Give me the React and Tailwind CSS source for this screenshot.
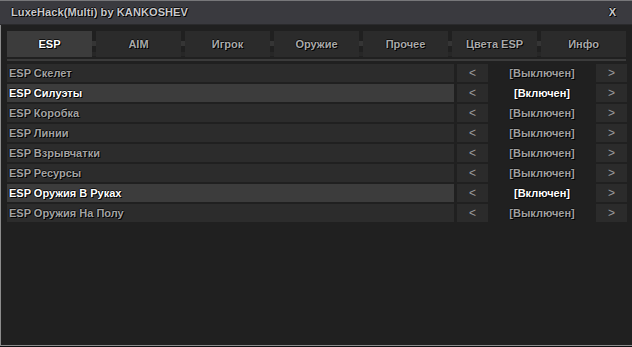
import React from "react";

const tabs = ["ESP", "AIM", "Игрок", "Оружие", "Прочее", "Цвета ESP", "Инфо"];
const rows = [
  ["ESP Скелет", false],
  ["ESP Силуэты", true],
  ["ESP Коробка", false],
  ["ESP Линии", false],
  ["ESP Взрывчатки", false],
  ["ESP Ресурсы", false],
  ["ESP Оружия В Руках", true],
  ["ESP Оружия На Полу", false],
];

const shadow = "[text-shadow:1px_1px_0_#000,-1px_0_0_#111,0_-1px_0_#111]";

export default function App() {
  return (
    <div className="w-[632px] h-[347px] bg-[#0e1112] flex flex-col font-['Liberation_Sans',Arial,sans-serif] text-[11px] font-bold">
      <div className="h-[25px] shrink-0 bg-[#3a3a3f] border-t border-[#77777a] border-b border-b-[#2a2a2c] flex items-center justify-between pl-[11px] pr-[16px]">
        <span className={`text-[#c9c9cc] tracking-[0.1px] ${shadow}`}>LuxeHack(Multi) by KANKOSHEV</span>
        <span className={`text-[#c9c9cc] ${shadow}`}>X</span>
      </div>
      <div className="h-[321px] shrink-0 bg-[#202020] border-l border-b border-[#8c8c8c] pl-[6px] pr-[5px] flex flex-col">
        <div className="mt-[6px] h-[26px] flex">
          {tabs.map((t, i) => (
            <React.Fragment key={t}>
              {i > 0 && (
                <div className="w-[4px] h-[26px] flex flex-col">
                  <div className="mt-[10px] h-[5px] bg-[#353535]" />
                  <div className="mt-[6px] h-[4px] bg-[#272727]" />
                </div>
              )}
              <div
                className={`w-[85px] h-[26px] flex items-center justify-center ${shadow} ${
                  i === 0 ? "bg-[#3c3c3c] text-white" : "bg-[#2b2b2b] text-[#a9a9a9]"
                }`}
              >
                {t}
              </div>
            </React.Fragment>
          ))}
        </div>
        <div className="mt-[2px] h-[2px] bg-[#3b3b3b] mr-[1px]" />
        <div className="mt-[3px] flex flex-col gap-[2px]">
          {rows.map(([label, on]) => (
            <div key={label} className="h-[18px] flex">
              <div
                className={`w-[447px] flex items-center pl-[2px] ${shadow} ${
                  on ? "bg-[#3c3c3c] text-white" : "bg-[#2c2c2c] text-[#a3a3a3]"
                }`}
              >
                {label}
              </div>
              <div className="ml-[3px] w-[31px] bg-[#2b2b2b] flex items-center justify-center text-[#9a9a9a] font-normal text-[12px]">
                &lt;
              </div>
              <div
                className={`w-[108px] flex items-center justify-center ${shadow} ${
                  on ? "text-white" : "text-[#a0a0a0]"
                }`}
              >
                {on ? "[Включен]" : "[Выключен]"}
              </div>
              <div className="w-[31px] bg-[#2b2b2b] flex items-center justify-center text-[#9a9a9a] font-normal text-[12px]">
                &gt;
              </div>
            </div>
          ))}
        </div>
      </div>
    </div>
  );
}
